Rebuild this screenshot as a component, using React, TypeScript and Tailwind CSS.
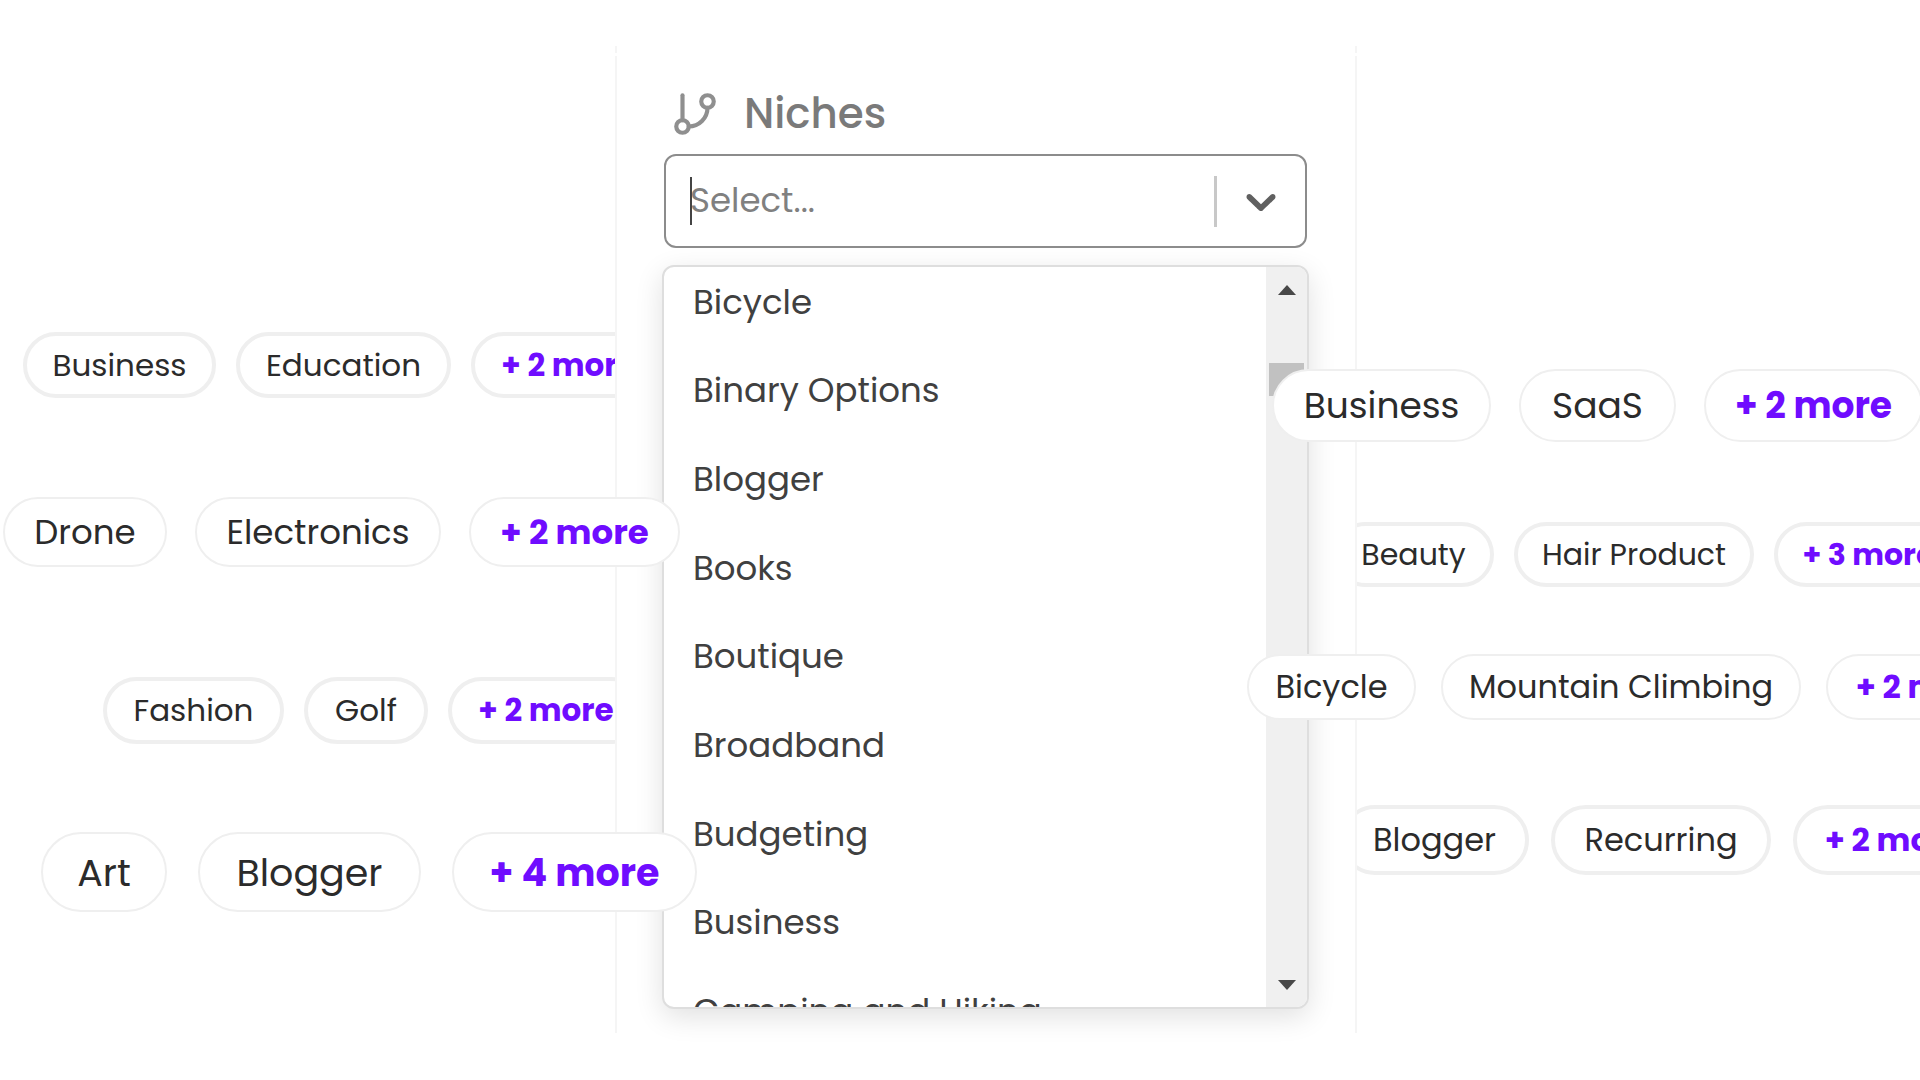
import { useState } from 'react'
import clsx from 'clsx'
import { GitBranch } from 'lucide-react'

interface Chip {
  label: string
  className: string
  more?: boolean
}

interface ChipRowData {
  id: string
  className: string
  chips: Chip[]
}

const NICHES = [
  'Bicycle',
  'Binary Options',
  'Blogger',
  'Books',
  'Boutique',
  'Broadband',
  'Budgeting',
  'Business',
  'Camping and Hiking',
]

// Rows with overflow-hidden slide behind the panel, z-10 rows float over it
const LEFT_ROWS: ChipRowData[] = [
  {
    id: 'education',
    className: 'h-[66px] gap-5 overflow-hidden pl-[23px] text-[31px] [--edge:4px]',
    chips: [
      { label: 'Business', className: 'w-[193px]' },
      { label: 'Education', className: 'w-[215px]' },
      { label: '+ 2 more', className: 'w-[196px]', more: true },
    ],
  },
  {
    id: 'drone',
    className: 'z-10 mt-[99px] h-[70px] gap-7 pl-[3px] text-[34px] [--edge:2px]',
    chips: [
      { label: 'Drone', className: 'w-[164px]' },
      { label: 'Electronics', className: 'w-[246px]' },
      { label: '+ 2 more', className: 'w-[211px]', more: true },
    ],
  },
  {
    id: 'fashion',
    className: 'mt-[110px] h-[67px] gap-5 overflow-hidden pl-[103px] text-[31px] [--edge:4px]',
    chips: [
      { label: 'Fashion', className: 'w-[181px]' },
      { label: 'Golf', className: 'w-[124px]' },
      { label: '+ 2 more', className: 'w-[196px]', more: true },
    ],
  },
  {
    id: 'art',
    className: 'z-10 mt-[88px] h-[80px] gap-[31px] pl-[41px] text-[38px] [--edge:2px]',
    chips: [
      { label: 'Art', className: 'w-[126px]' },
      { label: 'Blogger', className: 'w-[223px]' },
      { label: '+ 4 more', className: 'w-[245px]', more: true },
    ],
  },
]

const RIGHT_ROWS: ChipRowData[] = [
  {
    id: 'saas',
    className: 'z-10 -ml-[85px] h-[73px] gap-7 text-[36px] [--edge:2px]',
    chips: [
      { label: 'Business', className: 'w-[219px]' },
      { label: 'SaaS', className: 'w-[157px]' },
      { label: '+ 2 more', className: 'w-[219px]', more: true },
    ],
  },
  {
    id: 'beauty',
    className: 'mt-[80px] h-[65px] gap-5 overflow-hidden text-[30px] [--edge:4px]',
    chips: [
      { label: 'Beauty', className: '-ml-[24px] w-[161px]' },
      { label: 'Hair Product', className: 'w-[240px]' },
      { label: '+ 3 more', className: 'w-[189px]', more: true },
    ],
  },
  {
    id: 'bicycle',
    className: 'z-10 mt-[67px] -ml-[110px] h-[66px] gap-[25px] text-[32px] [--edge:2px]',
    chips: [
      { label: 'Bicycle', className: 'w-[169px]' },
      { label: 'Mountain Climbing', className: 'w-[360px]' },
      { label: '+ 2 more', className: 'w-[199px]', more: true },
    ],
  },
  {
    id: 'recurring',
    className: 'mt-[85px] h-[70px] gap-[22px] overflow-hidden text-[32px] [--edge:4px]',
    chips: [
      { label: 'Blogger', className: '-ml-[17px] w-[189px]' },
      { label: 'Recurring', className: 'w-[220px]' },
      { label: '+ 2 more', className: 'w-[203px]', more: true },
    ],
  },
]

function ChipRow({ row }: { row: ChipRowData }) {
  return (
    <ul className={clsx('relative flex', row.className)}>
      {row.chips.map((chip) => (
        <li key={chip.label} className={clsx('flex shrink-0', chip.className)}>
          {chip.more ? (
            <button
              type="button"
              className="w-full rounded-full border-(length:--edge) border-[#efefef] bg-white font-bold whitespace-nowrap text-[#6f0cff]"
            >
              {chip.label}
            </button>
          ) : (
            <span className="flex w-full items-center justify-center rounded-full border-(length:--edge) border-[#efefef] bg-white whitespace-nowrap text-[#2b2b2b]">
              {chip.label}
            </span>
          )}
        </li>
      ))}
    </ul>
  )
}

function NicheControl() {
  const [query, setQuery] = useState('')

  return (
    <div className="mt-[13px] flex h-[94px] items-center rounded-xl border-2 border-[#8c8c8c] bg-white">
      <div className="relative flex min-w-0 flex-1 items-center pl-6">
        <span className="absolute left-6 h-12 w-[2px] bg-[#444]" />
        <input
          id="niches"
          type="text"
          value={query}
          onChange={(e) => setQuery(e.target.value)}
          placeholder="Select..."
          className="w-full bg-transparent pb-[2px] text-[34px] text-[#404040] outline-none placeholder:text-[#808080]"
        />
      </div>
      <span className="h-[51px] w-[3px] bg-[#c8c8c8]" />
      <button
        type="button"
        aria-label="Toggle niches"
        className="flex w-[88px] items-center justify-center text-[#606060]"
      >
        <svg viewBox="0 0 20 20" className="size-[50px]" fill="currentColor">
          <path d="M4.516 7.548c0.436-0.446 1.043-0.481 1.576 0l3.908 3.747 3.908-3.747c0.533-0.481 1.141-0.446 1.574 0 0.436 0.445 0.408 1.197 0 1.615-0.406 0.418-4.695 4.502-4.695 4.502-0.217 0.223-0.502 0.335-0.787 0.335s-0.57-0.112-0.789-0.335c0 0-4.287-4.084-4.695-4.502s-0.436-1.17 0-1.615z" />
        </svg>
      </button>
    </div>
  )
}

function NicheMenu() {
  return (
    <div className="-mx-[2px] mt-[17px] flex h-[744px] overflow-hidden rounded-xl border-2 border-[#dedede] bg-white shadow-[0_8px_28px_rgba(0,0,0,0.12)]">
      <ul className="-mt-[9px] grid h-[798px] flex-1 auto-rows-fr pl-[29px] text-[34px] text-[#404040]">
        {NICHES.map((niche) => (
          <li key={niche} className="flex items-center">
            {niche}
          </li>
        ))}
      </ul>
      <div className="flex w-[41px] flex-col items-center bg-[#f0f0f0]">
        <button type="button" aria-label="Scroll up" className="flex h-[45px] items-center">
          <svg viewBox="0 0 18 10" className="h-[10px] w-[18px]" fill="#484848">
            <path d="M9 0l9 10H0z" />
          </svg>
        </button>
        <div className="mt-[51px] h-[33px] w-[35px] bg-[#c1c1c1]" />
        <button type="button" aria-label="Scroll down" className="mt-auto flex h-[45px] items-center">
          <svg viewBox="0 0 18 10" className="h-[10px] w-[18px]" fill="#484848">
            <path d="M9 10L0 0h18z" />
          </svg>
        </button>
      </div>
    </div>
  )
}

export default function App() {
  return (
    <main className="grid min-h-screen grid-cols-[615fr_742fr_563fr] items-start overflow-hidden bg-white font-[Poppins,Inter,sans-serif]">
      <section aria-label="Creators" className="min-w-0 pt-[332px]">
        {LEFT_ROWS.map((row) => (
          <ChipRow key={row.id} row={row} />
        ))}
      </section>

      <section className="min-w-0 pt-[46px]">
        <div className="h-[7px] border-x-2 border-[#f5f5f5]" />
        <div className="mt-[3px] border-x-2 border-[#f5f5f5] pt-[31px] pr-12 pb-6 pl-[47px]">
          <label htmlFor="niches" className="flex items-center text-[#7a7a7a]">
            <GitBranch className="ml-[6px] size-[50px] text-[#8f8f8f]" strokeWidth={2} />
            <span className="ml-6 text-[42px] leading-[54px] font-medium">Niches</span>
          </label>
          <NicheControl />
          <NicheMenu />
        </div>
      </section>

      <section aria-label="More creators" className="min-w-0 pt-[369px]">
        {RIGHT_ROWS.map((row) => (
          <ChipRow key={row.id} row={row} />
        ))}
      </section>
    </main>
  )
}
